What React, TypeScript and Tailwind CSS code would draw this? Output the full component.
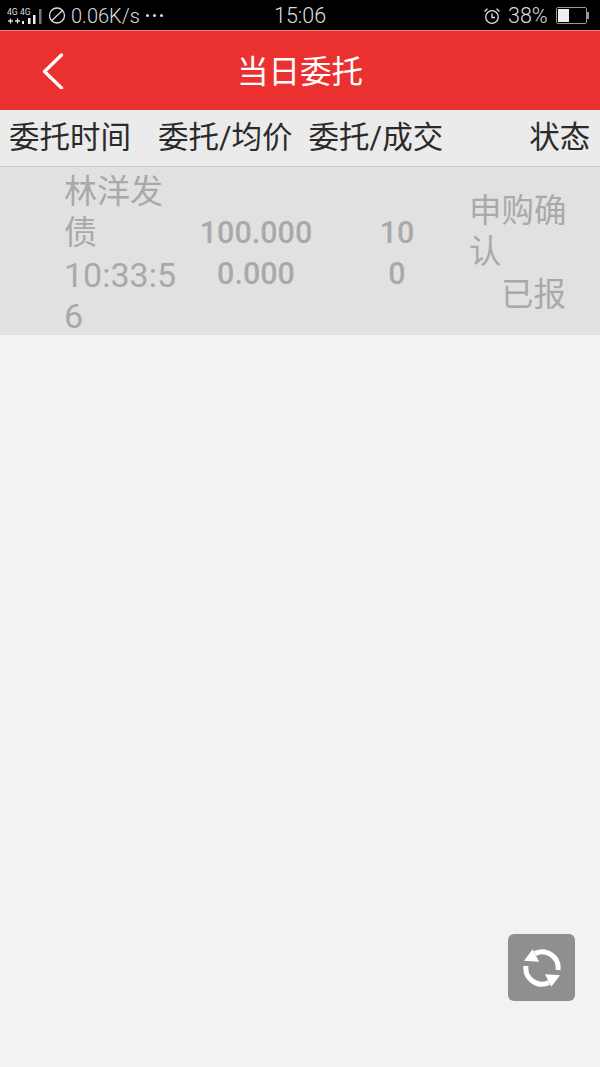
const font = { fontFamily: '"Roboto","Noto Sans CJK SC",sans-serif' };

function Signal() {
  return (
    <svg width="36" height="18" viewBox="0 0 36 18" className="block">
      <text x="0" y="8" fontSize="8.5" fill="#ddd" fontFamily="Roboto">4G</text>
      <text x="13" y="8" fontSize="8.5" fill="#ddd" fontFamily="Roboto">4G</text>
      <path d="M1 14h5M3.5 11.5v5M8 14h5M10.500 11.500v5" stroke="#ddd" strokeWidth="1.300" />
      <rect x="15" y="14" width="2" height="3" fill="#eee" />
      <rect x="21" y="11" width="2.500" height="6" fill="#eee" />
      <rect x="26" y="8" width="2.500" height="9" fill="#eee" />
      <rect x="32" y="2" width="2.500" height="15" fill="#777" />
    </svg>
  );
}

export default function App() {
  return (
    <div className="flex h-[1067px] w-[600px] flex-col overflow-hidden bg-[#f2f2f2]" style={font}>
      <div className="flex h-[30px] items-center bg-black pt-[1px] pl-[7px] text-[#dedede]">
        <Signal />
        <svg width="19" height="19" viewBox="0 0 19 19" className="ml-[5px]" fill="none" stroke="#ddd" strokeWidth="1.300">
          <circle cx="9" cy="9.500" r="7.500" />
          <path d="M3.800 14.500 14.500 4.500" />
        </svg>
        <span className="ml-[4px] w-[70px] text-[20px] leading-none font-light">0.06K/s</span>
        <span className="ml-[5px] flex gap-[4px]">
          <i className="size-[3px] rounded-full bg-[#ddd]" />
          <i className="size-[3px] rounded-full bg-[#ddd]" />
          <i className="size-[3px] rounded-full bg-[#ddd]" />
        </span>
        <span className="ml-[111px] w-[54px] text-[21.500px] leading-none font-light">15:06</span>
        <svg width="18" height="18" viewBox="0 0 18 18" className="ml-[155px]" fill="none" stroke="#ddd" strokeWidth="1.300">
          <circle cx="9" cy="10" r="6.300" />
          <path d="M9 6.500V10.500H12M1.500 4.500 4.500 1.800M16.500 4.500 13.500 1.800" />
        </svg>
        <span className="ml-[7px] w-[40px] text-[21.500px] leading-none font-light">38%</span>
        <div className="relative ml-[8px] flex h-[17px] w-[31px] items-center rounded-[2px] border border-[#999] p-[1px]">
          <div className="h-full w-[11px] bg-[#eee]" />
          <div className="absolute top-[4px] -right-[3px] h-[7px] w-[2px] bg-[#999]" />
        </div>
      </div>

      <div className="flex h-[80px] items-center border-t border-[#f08080] bg-[#eb3030]">
        <svg width="22" height="36" viewBox="0 0 22 36" className="ml-[42px]" fill="none" stroke="#fff" strokeWidth="3.300" strokeLinecap="round" strokeLinejoin="round">
          <path d="M19.500 2 2.500 18.500 19.500 35" />
        </svg>
        <span className="ml-[173px] pt-[5px] text-[31.500px] leading-none text-white">当日委托</span>
      </div>

      <div className="flex h-[57px] items-center border-b border-[#c8c8c8] bg-[#ebebeb] text-[30.500px] leading-none whitespace-nowrap text-[#2a2a2a]">
        <span className="ml-[9px]">委托时间</span>
        <span className="ml-[27px]">委托/均价</span>
        <span className="ml-[16px]">委托/成交</span>
        <span className="ml-[86px]">状态</span>
      </div>

      <div className="flex h-[168px] bg-[#e1e1e1] text-[#a9a9a9]">
        <div className="ml-[64px] w-[112px] pt-[4px] leading-[41px] [word-break:break-all]">
          <div className="text-[33px]">林洋发债</div>
          <div className="mt-[2px] text-[34px]">10:33:56</div>
        </div>
        <div className="flex w-[160px] flex-col items-center justify-center pt-[4px] text-[30.500px] leading-[41px] font-medium">
          <div>100.000</div>
          <div>0.000</div>
        </div>
        <div className="flex w-[122px] flex-col items-center justify-center pt-[4px] text-[30.500px] leading-[41px] font-medium">
          <div>10</div>
          <div>0</div>
        </div>
        <div className="ml-[11px] flex w-[98px] flex-col justify-center pt-[4px] text-[32.500px] leading-[41px]">
          <div>申购确认</div>
          <div className="mt-[2px] pr-[1px] text-right">已报</div>
        </div>
      </div>

      <div className="flex flex-1 items-start justify-end pt-[599px] pr-[25px]">
        <button className="flex size-[67px] items-center justify-center rounded-[6px] bg-[#8f8f8f]">
          <svg width="40" height="40" viewBox="0 0 40 40" fill="none">
            <path d="M13 5.600A16 16 0 0 1 36 22" stroke="#fff" strokeWidth="5" />
            <path d="M27 34.400A16 16 0 0 1 4 18" stroke="#fff" strokeWidth="5" />
            <path d="M2 12.700 10.700 1.300 17 13.700Z" fill="#fff" />
            <path d="M38 27.300 29.300 38.700 23 26.300Z" fill="#fff" />
          </svg>
        </button>
      </div>
    </div>
  );
}
